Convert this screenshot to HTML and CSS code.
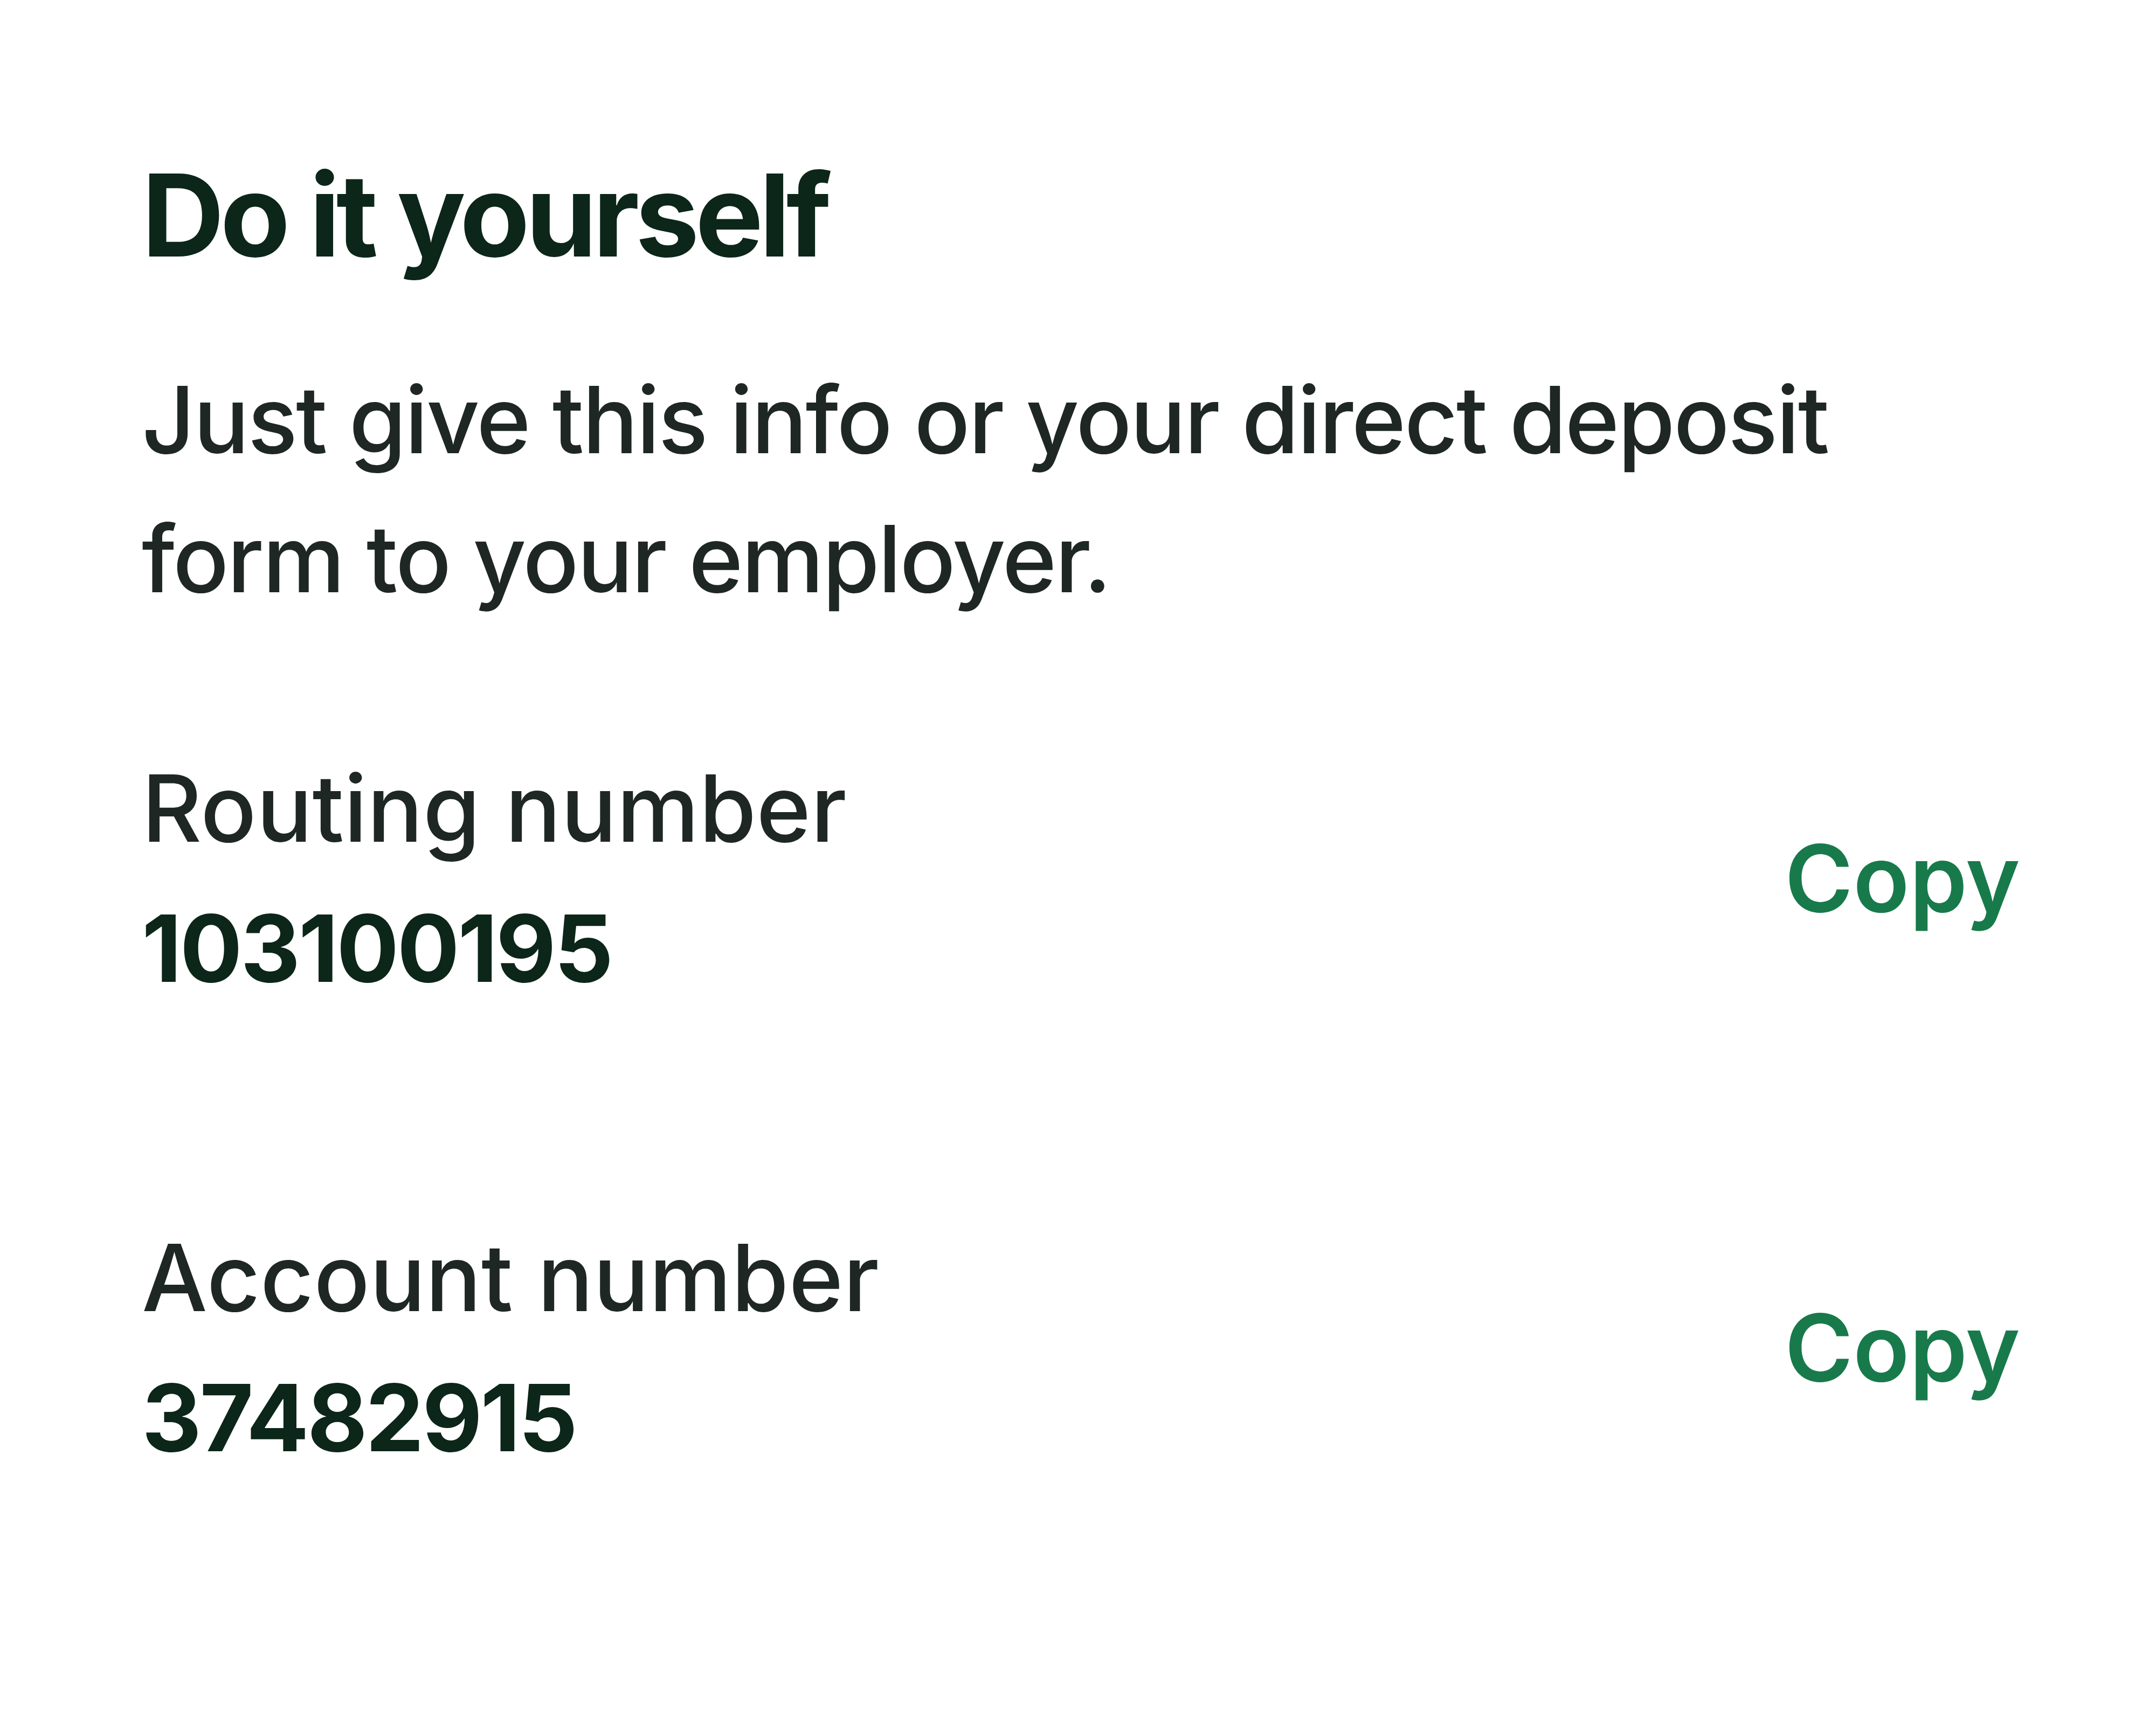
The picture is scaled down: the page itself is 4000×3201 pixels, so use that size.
FILE: index.html
```html
<!DOCTYPE html>
<html lang="en">
<head>
    <meta charset="UTF-8">
    <meta name="viewport" content="width=device-width, initial-scale=1.0">
    <title>Direct deposit</title>
    <link rel="stylesheet" href="styles.css">
</head>
<body>
    <main class="diy">
        <h1>Do it yourself</h1>
        <p class="intro">Just give this info or your direct deposit form to your employer.</p>

        <div class="detail">
            <div class="detail-text">
                <span class="detail-label">Routing number</span>
                <span class="detail-value">103100195</span>
            </div>
            <button class="copy-btn" onclick="copyValue(this)">Copy</button>
        </div>

        <div class="detail">
            <div class="detail-text">
                <span class="detail-label">Account number</span>
                <span class="detail-value">37482915</span>
            </div>
            <button class="copy-btn" onclick="copyValue(this)">Copy</button>
        </div>
    </main>

    <script>
        function copyValue(btn) {
            const value = btn.parentElement.querySelector('.detail-value').textContent;
            if (navigator.clipboard) navigator.clipboard.writeText(value);
        }
    </script>
</body>
</html>
```
FILE: styles.css
```css
* {
    margin: 0;
    padding: 0;
    box-sizing: border-box;
}

body {
    font-family: Inter, 'Liberation Sans', Arial, sans-serif;
    background: #fff;
    color: #1f2724;
}

.diy {
    padding: 272px 252px 0 263px;
}

h1 {
    font-size: 212px;
    line-height: 1.2;
    font-weight: 700;
    color: #0c2619;
    letter-spacing: -7.5px;
}

.intro {
    margin-top: 123px;
    font-size: 172px;
    font-weight: 500;
    line-height: 258px;
    letter-spacing: -3px;
    max-width: 3300px;
}

.detail {
    display: flex;
    justify-content: space-between;
    align-items: center;
    margin-top: 204px;
}

.detail + .detail {
    margin-top: 351px;
}

.detail-text {
    display: flex;
    flex-direction: column;
}

.detail-label,
.detail-value {
    font-size: 172px;
    line-height: 260px;
}

.detail-label {
    font-weight: 500;
}

.detail-value {
    font-weight: 700;
    color: #0c2619;
    letter-spacing: -3.5px;
}

.copy-btn {
    border: none;
    background: none;
    font-family: inherit;
    font-size: 172px;
    font-weight: 600;
    color: #187a4b;
    cursor: pointer;
}
```
